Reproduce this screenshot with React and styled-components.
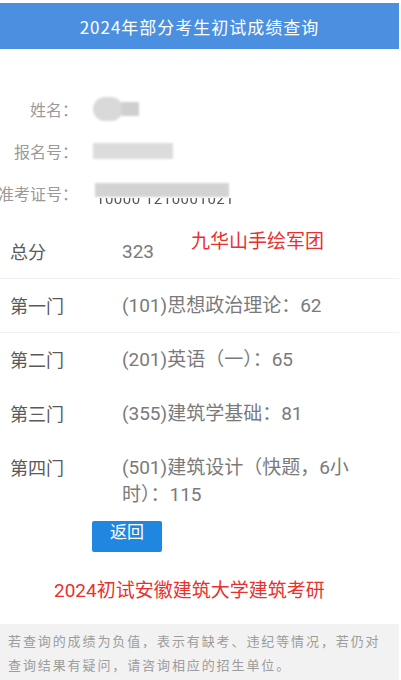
import React from "react";
import styled, { createGlobalStyle } from "styled-components";

const Global = createGlobalStyle`
  html, body { margin: 0; padding: 0; background: #ffffff; }
  body { font-family: Roboto, "Noto Sans CJK SC", sans-serif; }
  * { box-sizing: border-box; }
`;

const Page = styled.div`
  position: relative;
  width: 399px;
  height: 680px;
  padding-top: 3px;
  background: #ffffff;
  overflow: hidden;
  display: flex;
  flex-direction: column;
`;

const Header = styled.div`
  height: 46px;
  flex: none;
  background: #4a8fe0;
  color: #ffffff;
  display: flex;
  align-items: center;
  justify-content: center;
  font-family: "Noto Sans CJK SC", sans-serif;
  font-size: 17px;
  letter-spacing: 1px;
`;

const InfoList = styled.div`
  padding-top: 49px;
  display: flex;
  flex-direction: column;
  gap: 20px;
`;

const InfoRow = styled.div`
  display: flex;
  align-items: center;
  height: 22px;
`;

const InfoLabel = styled.div`
  width: 78px;
  flex: none;
  display: flex;
  justify-content: flex-end;
  white-space: nowrap;
  font-family: "Noto Sans CJK SC", sans-serif;
  font-size: 16px;
  color: #9a9a9a;
`;

const InfoValue = styled.div`
  position: relative;
  margin-left: 15px;
  height: 22px;
  display: flex;
  align-items: center;
`;

const Blur = styled.span`
  display: inline-block;
  width: ${(p) => p.w}px;
  height: ${(p) => p.h}px;
  background: ${(p) => p.c || "#d6d6d6"};
  border-radius: ${(p) => p.r || 1}px;
  filter: blur(1.2px);
  margin-left: ${(p) => p.ml || 0}px;
  margin-top: ${(p) => p.mt || 0}px;
`;

const HiddenDigits = styled.span`
  position: absolute;
  left: 3px;
  top: 8px;
  font-size: 15px;
  color: #555;
  letter-spacing: 0.5px;
  filter: blur(0.4px);
  white-space: nowrap;
  clip-path: inset(8px 0 0 0);
`;

const ScoreList = styled.div`
  margin-top: 21px;
  display: flex;
  flex-direction: column;
`;

const ScoreRow = styled.div`
  display: flex;
  align-items: flex-start;
  padding: 13px 0 ${(p) => (p.last ? 0 : 13)}px 10px;
  border-bottom: 1px solid ${(p) => (p.divider ? "#f1f1f1" : "transparent")};
  line-height: 27px;
`;

const ScoreLabel = styled.div`
  width: 112px;
  flex: none;
  color: #5a5a5a;
  font-family: "Noto Sans CJK SC", sans-serif;
  font-size: 18px;
`;

const ScoreValue = styled.div`
  width: 236px;
  color: #7a7a7a;
  font-size: 19px;
`;

const BackButton = styled.button`
  margin: 12px 0 0 92px;
  width: 70px;
  height: 31px;
  flex: none;
  padding: 0;
  border: none;
  border-radius: 2px;
  background: #1f87e0;
  color: #ffffff;
  font-family: "Noto Sans CJK SC", sans-serif;
  font-size: 17px;
  line-height: 20px;
  display: flex;
  justify-content: center;
  align-items: flex-start;
`;

const RedNote = styled.div`
  color: #e8312e;
  font-size: 19px;
  line-height: 22px;
  white-space: nowrap;
`;

const BottomNote = styled(RedNote)`
  margin-top: 28px;
  padding-left: 54px;
`;

const Watermark = styled(RedNote)`
  position: absolute;
  left: 191px;
  top: 229px;
  font-family: "Noto Sans CJK SC", sans-serif;
`;

const Footer = styled.div`
  margin-top: 22px;
  flex: 1;
  background: #f2f2f2;
  padding: 5px 6px 0 8px;
  color: #9c9c9c;
  font-family: "Noto Sans CJK SC", sans-serif;
  font-size: 13px;
  line-height: 24px;
  letter-spacing: 1.9px;
`;

const info = [
  { label: "姓名：", kind: "name" },
  { label: "报名号：", kind: "reg" },
  { label: "准考证号：", kind: "ticket" },
];

const scores = [
  { label: "总分", value: "323", divider: true },
  { label: "第一门", value: "(101)思想政治理论：62", divider: true },
  { label: "第二门", value: "(201)英语（一）：65" },
  { label: "第三门", value: "(355)建筑学基础：81" },
  { label: "第四门", value: "(501)建筑设计（快题，6小时）：115", last: true },
];

function Hidden({ kind }) {
  if (kind === "name")
    return (
      <>
        <Blur w={30} h={24} r={12} c="#d9d9d9" />
        <Blur w={18} h={14} c="#cfcfcf" ml={-2} />
      </>
    );
  if (kind === "reg") return <Blur w={80} h={16} c="#dcdcdc" />;
  return (
    <>
      <HiddenDigits>10000 1210001021</HiddenDigits>
      <Blur w={134} h={14} c="#d3d3d3" ml={2} mt={-6} />
    </>
  );
}

export default function App() {
  return (
    <Page>
      <Global />
      <Header>2024年部分考生初试成绩查询</Header>
      <InfoList>
        {info.map((i) => (
          <InfoRow key={i.label}>
            <InfoLabel>{i.label}</InfoLabel>
            <InfoValue>
              <Hidden kind={i.kind} />
            </InfoValue>
          </InfoRow>
        ))}
      </InfoList>
      <ScoreList>
        {scores.map((s) => (
          <ScoreRow key={s.label} divider={s.divider} last={s.last}>
            <ScoreLabel>{s.label}</ScoreLabel>
            <ScoreValue>{s.value}</ScoreValue>
          </ScoreRow>
        ))}
      </ScoreList>
      <BackButton>返回</BackButton>
      <BottomNote>2024初试安徽建筑大学建筑考研</BottomNote>
      <Watermark>九华山手绘军团</Watermark>
      <Footer>
        若查询的成绩为负值，表示有缺考、违纪等情况，若仍对查询结果有疑问，请咨询相应的招生单位。
      </Footer>
    </Page>
  );
}
